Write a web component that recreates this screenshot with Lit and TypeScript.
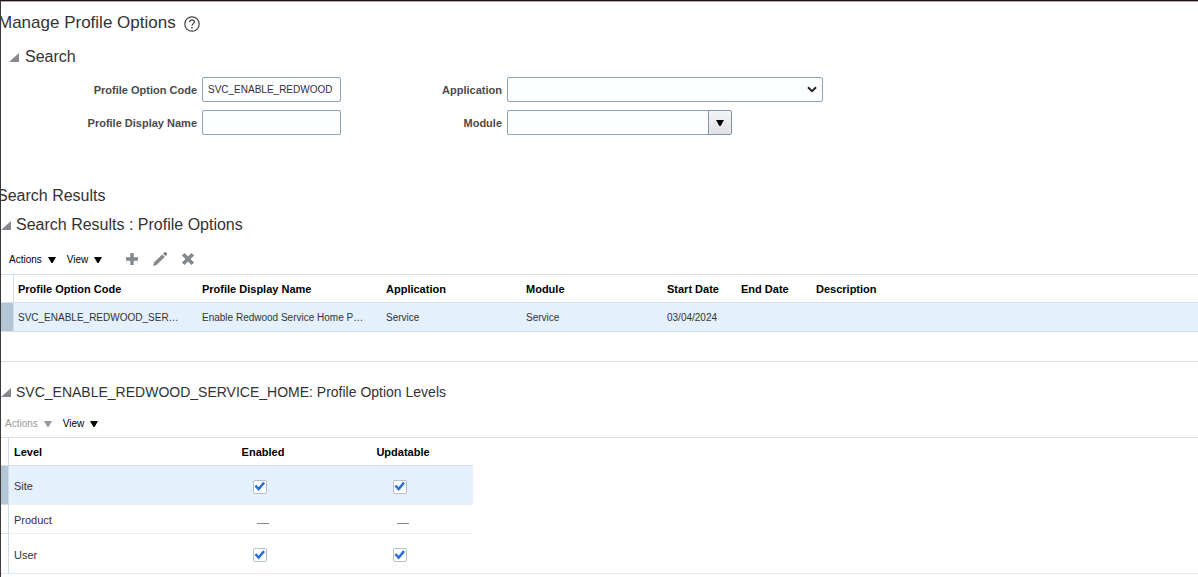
import { LitElement, html, css, svg } from "lit";
import { customElement, property, state } from "lit/decorators.js";

interface ProfileOption {
  code: string;
  name: string;
  application: string;
  module: string;
  start: string;
  end: string;
  description: string;
}

interface Level {
  name: string;
  enabled: boolean | null;
  updatable: boolean | null;
}

const OPTIONS: ProfileOption[] = [
  {
    code: "SVC_ENABLE_REDWOOD_SERVICE_HOME",
    name: "Enable Redwood Service Home Profile",
    application: "Service",
    module: "Service",
    start: "03/04/2024",
    end: "",
    description: "",
  },
];

const LEVELS: Level[] = [
  { name: "Site", enabled: true, updatable: true },
  { name: "Product", enabled: null, updatable: null },
  { name: "User", enabled: true, updatable: true },
];

const disclosure = html`<svg class="disclosure" width="10" height="9" viewBox="0 0 10 9" aria-hidden="true">
  ${svg`<path d="M10 0V9H0Z" fill="#85898d" />`}
</svg>`;

const caret = html`<svg width="8" height="6" viewBox="0 0 8 6" aria-hidden="true">
  ${svg`<path d="M0 0H8L4.6 6H3.4Z" fill="currentColor" />`}
</svg>`;

@customElement("menu-button")
export class MenuButton extends LitElement {
  @property() label = "";
  @property({ type: Boolean }) disabled = false;

  static styles = css`
    :host {
      display: block;
    }
    button {
      display: flex;
      align-items: center;
      gap: 6px;
      padding: 2px 0 0;
      border: 0;
      background: none;
      color: #000;
      font: 10px/14px "Liberation Sans", Arial, sans-serif;
    }
    button:disabled {
      color: #9a9a9a;
    }
  `;

  render() {
    return html`<button type="button" aria-haspopup="menu" ?disabled=${this.disabled}>${this.label} ${caret}</button>`;
  }
}

@customElement("app-root")
export class AppRoot extends LitElement {
  @state() private levels = LEVELS;

  static styles = css`
    :host {
      display: block;
      box-sizing: border-box;
      min-height: 100vh;
      overflow: hidden;
      padding-top: 11px;
      border-top: 1px solid #1c1112;
      border-left: 1px solid #3a3a3a;
      box-shadow: inset 0 1px #b5abab;
      background: #fff;
      color: #333;
      font: 10px/14px "Liberation Sans", Arial, sans-serif;
    }
    h1,
    h2 {
      margin: 0;
      font-weight: 400;
      font-size: 16px;
      line-height: 20px;
    }
    .title {
      display: flex;
      align-items: center;
      gap: 8px;
      margin-left: -3px;
    }
    .title h1 {
      font-size: 17px;
      line-height: 22px;
    }
    .help {
      display: flex;
      padding: 0;
      border: 0;
      margin-top: 2px;
      background: none;
    }
    .section {
      display: flex;
      align-items: center;
      gap: 5px;
    }
    .section.search {
      margin: 13px 0 0 8px;
      gap: 6px;
    }
    .levels-heading h2 {
      font-size: 14px;
    }
    .disclosure {
      flex: none;
    }
    .form {
      display: grid;
      grid-template-columns: 196px 139px 156px minmax(0, 316px);
      column-gap: 5px;
      row-gap: 8px;
      align-items: center;
      margin-top: 10px;
    }
    .form label {
      text-align: right;
      font-weight: 700;
      font-size: 11px;
      color: #4a4a4a;
    }
    input.text,
    select {
      box-sizing: border-box;
      width: 100%;
      height: 25px;
      min-width: 0;
      margin: 0;
      padding: 0 8px 0 5px;
      border: 1px solid #8fa3b3;
      border-radius: 2px;
      background: #fbfdff;
      color: #333;
      font: inherit;
      appearance: none;
    }
    .select {
      position: relative;
    }
    .select select {
      display: block;
    }
    .select svg {
      position: absolute;
      right: 6px;
      top: 9px;
      pointer-events: none;
    }
    .combo {
      display: flex;
      max-width: 225px;
    }
    .combo input.text {
      border-radius: 2px 0 0 2px;
    }
    .combo button {
      display: flex;
      flex: none;
      align-items: center;
      justify-content: center;
      width: 24px;
      height: 25px;
      margin-left: -1px;
      padding: 0;
      border: 1px solid #8495a8;
      border-radius: 0 2px 2px 0;
      background: linear-gradient(#f3f4f5, #dfe2e6);
      color: #000;
    }
    .results {
      margin: 51px 0 9px -4px;
    }
    .toolbar {
      display: flex;
      align-items: center;
      height: 30px;
      gap: 11px;
      margin-top: 9px;
      padding-left: 8px;
    }
    .toolbar.compact {
      height: 28px;
      margin-top: 7px;
      padding-left: 4px;
    }
    .icons {
      display: flex;
      align-items: center;
      gap: 13px;
      margin-left: 12px;
    }
    .icons button {
      display: flex;
      padding: 0;
      border: 0;
      background: none;
    }
    .frame {
      border-top: 1px solid #d6dfe6;
    }
    .options-frame {
      padding-bottom: 29px;
      border-bottom: 1px solid #d6dfe6;
      margin-bottom: 20px;
    }
    .levels-frame {
      border-bottom: 1px solid #e1e8ee;
    }
    table {
      border-collapse: separate;
      border-spacing: 0;
      table-layout: fixed;
      width: 100%;
    }
    .levels {
      width: 472px;
    }
    th,
    td {
      box-sizing: border-box;
      padding: 0 0 0 4px;
      border-bottom: 1px solid #d6dfe6;
      text-align: left;
      white-space: nowrap;
    }
    th {
      height: 28px;
      color: #000;
      font-size: 11px;
      font-weight: 700;
    }
    td {
      padding-top: 2px;
    }
    .options td {
      height: 29px;
      padding-right: 17px;
      overflow: hidden;
      text-overflow: ellipsis;
    }
    .options .date {
      padding-right: 0;
      padding-left: 14px;
    }
    .options th.wide,
    .options td.wide {
      padding-left: 9px;
    }
    .options th.last {
      padding-left: 16px;
    }
    .gutter {
      padding: 0;
      border-right: 1px solid #d0dde7;
    }
    tr.selected td {
      background: #e4f0fc;
    }
    tr.selected td.gutter {
      background: #b4c5d5;
    }
    .c-gutter {
      width: 13px;
    }
    .c-text {
      width: 184px;
    }
    .c-app {
      width: 135px;
    }
    .c-module {
      width: 136px;
    }
    .c-start {
      width: 74px;
    }
    .c-end {
      width: 73px;
    }
    .levels .c-gutter {
      width: 8px;
    }
    .levels .c-flag {
      width: 140px;
    }
    .levels th,
    .levels td {
      padding-left: 5px;
      font-size: 11px;
    }
    .levels td {
      height: 39px;
      border-bottom-color: #edf0f2;
    }
    .levels tr.short td {
      height: 29px;
    }
    .levels tr:last-child td {
      border-bottom: 0;
    }
    .levels td.gutter {
      border-bottom-color: #d6dfe6;
    }
    .levels .flag {
      padding-left: 0;
      text-align: center;
    }
    .tick {
      display: inline-grid;
      box-sizing: border-box;
      width: 14px;
      height: 14px;
      margin: 0 7px 0 0;
      border: 1px solid #b3c0cb;
      border-radius: 2px;
      background: #fff;
      vertical-align: middle;
      appearance: none;
    }
    .tick:checked::before {
      content: "";
      background: #2a6fd0;
      clip-path: polygon(8% 48%, 24% 36%, 42% 56%, 80% 10%, 96% 24%, 43% 88%);
    }
    .none {
      display: inline-block;
      width: 12px;
      height: 1px;
      margin-top: 5px;
      background: #8a8a8a;
      vertical-align: middle;
    }
  `;

  private flag(value: boolean | null, label: string) {
    return value === null
      ? html`<span class="none"></span>`
      : html`<input class="tick" type="checkbox" aria-label=${label} .checked=${value} />`;
  }

  render() {
    return html`
      <div class="title">
        <h1>Manage Profile Options</h1>
        <button class="help" type="button" aria-label="Help">
          <svg width="16" height="16" viewBox="0 0 16 16" fill="none" stroke="#444" stroke-width="1.2">
            <circle cx="8" cy="8" r="7.2" />
            <path d="M5.7 6.2C5.7 4.7 6.7 3.9 8 3.9S10.3 4.7 10.3 6C10.3 7.7 8 7.8 8 9.8" />
            <path d="M8 11.1V12.4" stroke-width="1.4" />
          </svg>
        </button>
      </div>

      <div class="section search">${disclosure}<h2>Search</h2></div>
      <form class="form">
        <label for="code">Profile Option Code</label>
        <input class="text" id="code" type="text" .value=${"SVC_ENABLE_REDWOOD_SERVICE_HOME"} />
        <label for="application">Application</label>
        <div class="select">
          <select id="application">
            <option></option>
          </select>
          <svg width="10" height="7" viewBox="0 0 10 7" fill="none" stroke="#222" stroke-width="2" aria-hidden="true">
            <path d="M1 1.2L5 5.2L9 1.2" />
          </svg>
        </div>
        <label for="name">Profile Display Name</label>
        <input class="text" id="name" type="text" />
        <label for="module">Module</label>
        <div class="combo">
          <input class="text" id="module" type="text" />
          <button type="button" aria-label="Search module">${caret}</button>
        </div>
      </form>

      <h2 class="results">Search Results</h2>
      <div class="section">${disclosure}<h2>Search Results : Profile Options</h2></div>
      <div class="toolbar">
        <menu-button label="Actions"></menu-button>
        <menu-button label="View"></menu-button>
        <div class="icons">
          <button type="button" aria-label="Add">
            <svg width="14" height="14" viewBox="0 0 14 14"><path d="M5.3 1H8.7V5.3H13V8.7H8.7V13H5.3V8.7H1V5.3H5.3Z" fill="#85898d" /></svg>
          </button>
          <button type="button" aria-label="Edit">
            <svg width="16" height="16" viewBox="0 0 16 16" fill="#85898d">
              <path d="M1 15L2.2 11.3L10.2 3.5L12.8 6L4.8 13.8Z" />
              <path d="M11 2.7L12.6 1.1C13 .8 13.5 .8 13.9 1.1L15 2.2C15.3 2.6 15.3 3.1 15 3.5L13.5 5.2Z" />
            </svg>
          </button>
          <button type="button" aria-label="Delete">
            <svg width="14" height="14" viewBox="0 0 14 14" fill="none" stroke="#85898d" stroke-width="3.6">
              <path d="M2.2 2.2L11.8 11.8M11.8 2.2L2.2 11.8" />
            </svg>
          </button>
        </div>
      </div>
      <div class="frame options-frame">
        <table class="options">
          <colgroup>
            <col class="c-gutter" />
            <col class="c-text" />
            <col class="c-text" />
            <col class="c-app" />
            <col class="c-module" />
            <col class="c-start" />
            <col class="c-end" />
            <col />
          </colgroup>
          <thead>
            <tr>
              <th class="gutter"></th>
              <th>Profile Option Code</th>
              <th>Profile Display Name</th>
              <th>Application</th>
              <th class="wide">Module</th>
              <th class="date">Start Date</th>
              <th class="date">End Date</th>
              <th class="last">Description</th>
            </tr>
          </thead>
          <tbody>
            ${OPTIONS.map(
              (o) => html`<tr class="selected">
                <td class="gutter"></td>
                <td>${o.code}</td>
                <td>${o.name}</td>
                <td>${o.application}</td>
                <td class="wide">${o.module}</td>
                <td class="date">${o.start}</td>
                <td class="date">${o.end}</td>
                <td>${o.description}</td>
              </tr>`
            )}
          </tbody>
        </table>
      </div>

      <div class="section levels-heading">
        ${disclosure}
        <h2>SVC_ENABLE_REDWOOD_SERVICE_HOME: Profile Option Levels</h2>
      </div>
      <div class="toolbar compact">
        <menu-button label="Actions" disabled></menu-button>
        <menu-button label="View"></menu-button>
      </div>
      <div class="frame levels-frame">
        <table class="levels">
          <colgroup>
            <col class="c-gutter" />
            <col />
            <col class="c-flag" />
            <col class="c-flag" />
          </colgroup>
          <thead>
            <tr>
              <th class="gutter"></th>
              <th>Level</th>
              <th class="flag">Enabled</th>
              <th class="flag">Updatable</th>
            </tr>
          </thead>
          <tbody>
            ${this.levels.map(
              (l, i) => html`<tr class="${i === 0 ? "selected" : ""} ${l.enabled === null ? "short" : ""}">
                <td class="gutter"></td>
                <td>${l.name}</td>
                <td class="flag">${this.flag(l.enabled, `${l.name} enabled`)}</td>
                <td class="flag">${this.flag(l.updatable, `${l.name} updatable`)}</td>
              </tr>`
            )}
          </tbody>
        </table>
      </div>
    `;
  }
}
